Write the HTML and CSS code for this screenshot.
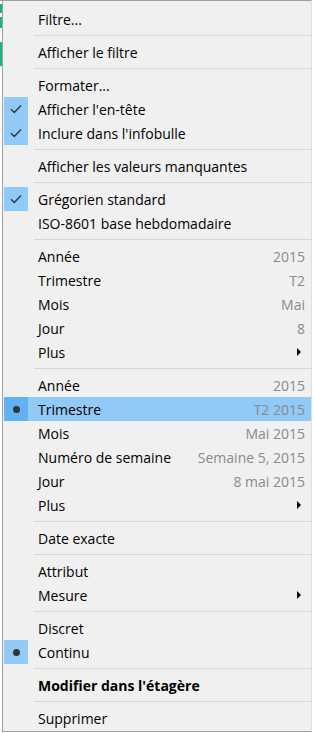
FILE: index.html
```html
<!DOCTYPE html>
<html lang="fr">
<head>
    <meta charset="UTF-8">
    <meta name="viewport" content="width=device-width, initial-scale=1.0">
    <title>Menu contextuel</title>
    <link rel="stylesheet" href="styles.css">
</head>
<body>
    <div class="edge"></div>

    <div class="menu">
        <div class="item"><span class="icon"></span><span class="label">Filtre...</span></div>
        <div class="sep"></div>
        <div class="item"><span class="icon"></span><span class="label">Afficher le filtre</span></div>
        <div class="sep"></div>
        <div class="item"><span class="icon"></span><span class="label">Formater...</span></div>
        <div class="item"><span class="icon checked">
            <svg width="12" height="10" viewBox="0 0 12 10"><path d="M1 5.2 L4.3 8.4 L11 1.6" fill="none" stroke="#333" stroke-width="1.4"/></svg>
        </span><span class="label">Afficher l'en-tête</span></div>
        <div class="item"><span class="icon checked">
            <svg width="12" height="10" viewBox="0 0 12 10"><path d="M1 5.2 L4.3 8.4 L11 1.6" fill="none" stroke="#333" stroke-width="1.4"/></svg>
        </span><span class="label">Inclure dans l'infobulle</span></div>
        <div class="sep"></div>
        <div class="item"><span class="icon"></span><span class="label">Afficher les valeurs manquantes</span></div>
        <div class="sep"></div>
        <div class="item"><span class="icon checked">
            <svg width="12" height="10" viewBox="0 0 12 10"><path d="M1 5.2 L4.3 8.4 L11 1.6" fill="none" stroke="#333" stroke-width="1.4"/></svg>
        </span><span class="label">Grégorien standard</span></div>
        <div class="item"><span class="icon"></span><span class="label">ISO-8601 base hebdomadaire</span></div>
        <div class="sep"></div>

        <!-- Parties de date -->
        <div class="item"><span class="icon"></span><span class="label">Année</span><span class="value">2015</span></div>
        <div class="item"><span class="icon"></span><span class="label">Trimestre</span><span class="value">T2</span></div>
        <div class="item"><span class="icon"></span><span class="label">Mois</span><span class="value">Mai</span></div>
        <div class="item"><span class="icon"></span><span class="label">Jour</span><span class="value">8</span></div>
        <div class="item"><span class="icon"></span><span class="label">Plus</span><span class="arrow"></span></div>
        <div class="sep"></div>

        <!-- Valeurs de date -->
        <div class="item"><span class="icon"></span><span class="label">Année</span><span class="value">2015</span></div>
        <div class="item active"><span class="icon checked"><span class="dot"></span></span><span class="label">Trimestre</span><span class="value">T2 2015</span></div>
        <div class="item"><span class="icon"></span><span class="label">Mois</span><span class="value">Mai 2015</span></div>
        <div class="item"><span class="icon"></span><span class="label">Numéro de semaine</span><span class="value">Semaine 5, 2015</span></div>
        <div class="item"><span class="icon"></span><span class="label">Jour</span><span class="value">8 mai 2015</span></div>
        <div class="item"><span class="icon"></span><span class="label">Plus</span><span class="arrow"></span></div>
        <div class="sep"></div>
        <div class="item"><span class="icon"></span><span class="label">Date exacte</span></div>
        <div class="sep"></div>
        <div class="item"><span class="icon"></span><span class="label">Attribut</span></div>
        <div class="item"><span class="icon"></span><span class="label">Mesure</span><span class="arrow"></span></div>
        <div class="sep"></div>
        <div class="item"><span class="icon"></span><span class="label">Discret</span></div>
        <div class="item"><span class="icon checked"><span class="dot"></span></span><span class="label">Continu</span></div>
        <div class="sep"></div>
        <div class="item"><span class="icon"></span><span class="label bold">Modifier dans l'étagère</span></div>
        <div class="sep"></div>
        <div class="item"><span class="icon"></span><span class="label">Supprimer</span></div>
    </div>
</body>
</html>
```

FILE: styles.css
```css
/* Page */
body {
    margin: 0;
    display: flex;
    align-items: flex-start;
    background-color: #fff;
    font-family: "Open Sans", "Noto Sans", sans-serif;
    font-size: 14px;
    color: #000;
}

/* Bord de la fenêtre derrière le menu */
.edge {
    width: 2px;
    height: 733px;
    background: linear-gradient(to bottom,
        #a0a0a0 0, #a0a0a0 1px,
        #fff 1px, #fff 4px,
        #1bb57c 4px, #1bb57c 13px,
        #fff 13px, #fff 17px,
        #1bb57c 17px, #1bb57c 28px,
        #fff 28px, #fff 42px,
        #1bb57c 42px, #1bb57c 66px,
        #fff 66px);
}

/* Menu */
.menu {
    width: 308px;
    margin-top: 0;
    padding: 6px 0 1px;
    background-color: #f0f0f0;
    border: 1px solid #a0a0a0;
    border-top-color: #a0a0a0;
    border-right-color: #e0e0e0;
    border-bottom-color: #a0a0a0;
}

.item {
    display: flex;
    align-items: center;
    height: 24px;
    margin-left: 1px;
    padding-right: 6px;
    white-space: nowrap;
}

.item.active {
    background-color: #91c9f7;
}

.icon {
    width: 24px;
    height: 24px;
    flex: none;
    display: flex;
    align-items: center;
    justify-content: center;
}

.icon.checked {
    background-color: #91c9f7;
}

.item.active .icon.checked {
    background-color: #62b1f4;
}

.dot {
    width: 7px;
    height: 7px;
    border-radius: 50%;
    background-color: #333;
}

.label {
    padding-left: 10px;
}

.bold {
    font-weight: bold;
}

.value {
    margin-left: auto;
    color: #8a8a8a;
}

/* Flèche de sous-menu */
.arrow {
    margin-left: auto;
    margin-right: 4px;
    width: 0;
    height: 0;
    border-top: 4px solid transparent;
    border-bottom: 4px solid transparent;
    border-left: 4px solid #000;
}

/* Séparateur */
.sep {
    height: 9px;
    display: flex;
    align-items: center;
    padding-left: 31px;
}

.sep::after {
    content: "";
    flex: 1;
    height: 1px;
    background-color: #d7d7d7;
}
```
